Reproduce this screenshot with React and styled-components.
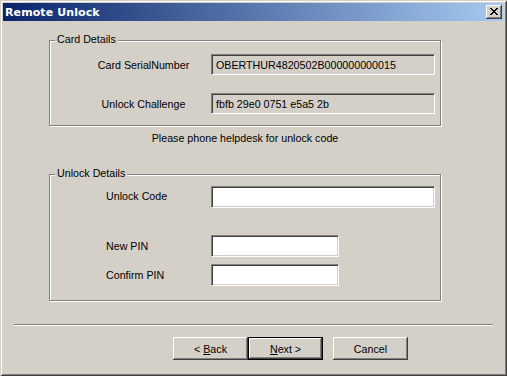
import styled, { createGlobalStyle } from "styled-components";

const Global = createGlobalStyle`
  html, body { margin: 0; padding: 0; background: #d4d0c8; }
  * { box-sizing: border-box; }
`;

const Window = styled.div`
  width: 507px;
  height: 376px;
  padding: 3px 4px 3px 3px;
  background: #d4d0c8;
  display: flex;
  flex-direction: column;
  font-family: "Liberation Sans", Arial, sans-serif;
  font-size: 10.7px;
  color: #000;
  box-shadow: inset 1px 1px 0 #d4d0c8, inset -1px -1px 0 #404040,
    inset 2px 2px 0 #fff, inset -2px -2px 0 #808080;
`;

const TitleBar = styled.div`
  height: 18px;
  display: flex;
  align-items: center;
  justify-content: space-between;
  padding: 0 1px 0 2px;
  background: linear-gradient(to right, #0a246a, #a6caf0);
`;

const Title = styled.span`
  color: #fff;
  font-family: "DejaVu Sans", Verdana, sans-serif;
  font-weight: bold;
  font-size: 11px;
  letter-spacing: 0.1px;
`;

const CloseButton = styled.div`
  width: 16px;
  height: 14px;
  display: flex;
  align-items: center;
  justify-content: center;
  background: #d4d0c8;
  box-shadow: inset -1px -1px 0 #404040, inset 1px 1px 0 #fff,
    inset -2px -2px 0 #808080, inset 2px 2px 0 #d4d0c8;
  svg { margin-top: -1px; }
`;

const Body = styled.div`
  display: flex;
  flex-direction: column;
`;

const Group = styled.div`
  position: relative;
  margin: ${(p) => p.$top}px 0 0 46px;
  width: 392px;
  height: ${(p) => p.$height}px;
  border: 1px solid #808080;
  box-shadow: 1px 1px 0 #fff, inset 1px 1px 0 #fff;
`;

const GroupLabel = styled.span`
  position: absolute;
  left: 5px;
  top: -8px;
  padding: 0 2px;
  line-height: 13px;
  background: #d4d0c8;
`;

const DetailsGrid = styled.div`
  display: grid;
  grid-template-columns: 135px 224px;
  row-gap: 18px;
  align-items: center;
  padding: 13px 0 0 26px;
`;

const CenteredLabel = styled.span`
  text-align: center;
`;

const Field = styled.div`
  width: ${(p) => p.$width}px;
  height: ${(p) => p.$height}px;
  padding: 0 4px;
  display: flex;
  align-items: center;
  white-space: nowrap;
  background: ${(p) => (p.$readOnly ? "#d4d0c8" : "#fff")};
  border-top: 1px solid #808080;
  border-left: 1px solid #808080;
  border-bottom: 1px solid #fff;
  border-right: 1px solid #fff;
  box-shadow: inset 1px 1px 0 #404040, inset -1px -1px 0 #d4d0c8;
`;

const Notice = styled.div`
  margin: 6px 0 0 46px;
  width: 392px;
  line-height: 13px;
  text-align: center;
`;

const FormRow = styled.div`
  display: flex;
  align-items: center;
  margin-top: ${(p) => p.$top}px;
  padding-left: 56px;
`;

const RowLabel = styled.span`
  width: 105px;
  margin-top: ${(p) => p.$shift || 0}px;
`;

const Separator = styled.div`
  margin: 23px 0 0 11px;
  width: 479px;
  height: 2px;
  border-top: 1px solid #808080;
  border-bottom: 1px solid #fff;
`;

const ButtonRow = styled.div`
  display: flex;
  margin: 11px 0 0 170px;
`;

const Button = styled.div`
  width: 75px;
  height: 23px;
  margin-left: ${(p) => p.$gap || 0}px;
  display: flex;
  align-items: center;
  justify-content: center;
  background: #d4d0c8;
  border: ${(p) => (p.$default ? "1px solid #000" : "none")};
  box-shadow: inset -1px -1px 0 #404040, inset 1px 1px 0 #fff,
    inset -2px -2px 0 #808080, inset 2px 2px 0 #d4d0c8;
  u { text-decoration: underline; }
`;

const CloseGlyph = () => (
  <svg width="8" height="7" viewBox="0 0 8 7" shapeRendering="crispEdges">
    {[
      [0, 0, 2], [6, 0, 2],
      [1, 1, 2], [5, 1, 2],
      [2, 2, 4],
      [3, 3, 2],
      [2, 4, 4],
      [1, 5, 2], [5, 5, 2],
      [0, 6, 2], [6, 6, 2],
    ].map(([x, y, w], i) => (
      <rect key={i} x={x} y={y} width={w} height="1" fill="#000" />
    ))}
  </svg>
);

export default function App() {
  return (
    <>
      <Global />
      <Window>
        <TitleBar>
          <Title>Remote Unlock</Title>
          <CloseButton>
            <CloseGlyph />
          </CloseButton>
        </TitleBar>
        <Body>
          <Group $top={19} $height={86}>
            <GroupLabel>Card Details</GroupLabel>
            <DetailsGrid>
              <CenteredLabel>Card SerialNumber</CenteredLabel>
              <Field $readOnly $width={224} $height={21}>
                OBERTHUR4820502B000000000015
              </Field>
              <CenteredLabel>Unlock Challenge</CenteredLabel>
              <Field $readOnly $width={224} $height={21}>
                fbfb 29e0 0751 e5a5 2b
              </Field>
            </DetailsGrid>
          </Group>
          <Notice>Please phone helpdesk for unlock code</Notice>
          <Group $top={29} $height={127}>
            <GroupLabel>Unlock Details</GroupLabel>
            <FormRow $top={11}>
              <RowLabel $shift={-2}>Unlock Code</RowLabel>
              <Field $width={224} $height={22} />
            </FormRow>
            <FormRow $top={27}>
              <RowLabel>New PIN</RowLabel>
              <Field $width={128} $height={22} />
            </FormRow>
            <FormRow $top={7}>
              <RowLabel>Confirm PIN</RowLabel>
              <Field $width={128} $height={22} />
            </FormRow>
          </Group>
          <Separator />
          <ButtonRow>
            <Button>
              &lt;&nbsp;<u>B</u>ack
            </Button>
            <Button $default>
              <u>N</u>ext &gt;
            </Button>
            <Button $gap={10}>Cancel</Button>
          </ButtonRow>
        </Body>
      </Window>
    </>
  );
}
